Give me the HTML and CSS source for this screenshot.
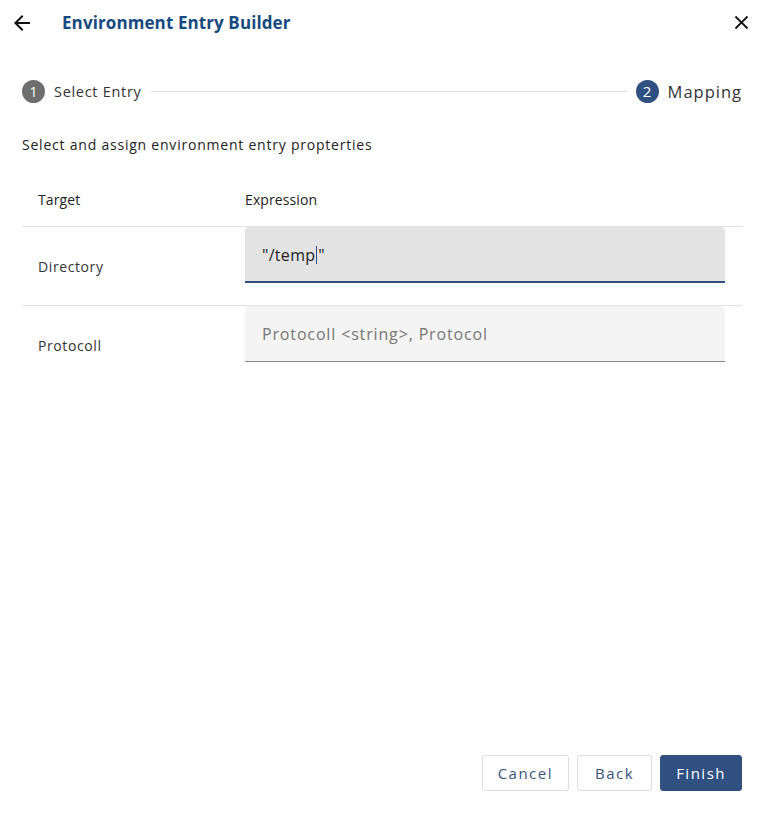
FILE: index.html
```html
<!DOCTYPE html>
<html>
<head lang="en">
    <meta charset="UTF-8">
    <title>Environment Entry Builder</title>
    <link rel="stylesheet" href="styles.css">
</head>
<body>
    <div id="dialog">
        <div class="header">
            <span class="icon-btn back">
                <svg width="24" height="24" viewBox="0 0 24 24"><path d="M20 11H7.83l5.59-5.59L12 4l-8 8 8 8 1.41-1.41L7.83 13H20v-2z" fill="#111"/></svg>
            </span>
            <h1 class="title">Environment Entry Builder</h1>
            <span class="icon-btn close">
                <svg width="23" height="23" viewBox="0 0 24 24"><path d="M19 6.41L17.59 5 12 10.59 6.41 5 5 6.41 10.59 12 5 17.59 6.41 19 12 13.41 17.59 19 19 17.59 13.41 12z" fill="#111"/></svg>
            </span>
        </div>
        <div class="stepper">
            <div class="step done">
                <span class="num">1</span>
                <span class="label">Select Entry</span>
            </div>
            <div class="step-line"></div>
            <div class="step active">
                <span class="num">2</span>
                <span class="label">Mapping</span>
            </div>
        </div>
        <p class="desc">Select and assign environment entry propterties</p>
        <div class="table">
            <div class="row head">
                <div class="col-target">Target</div>
                <div class="col-expr">Expression</div>
            </div>
            <div class="row">
                <div class="col-target">Directory</div>
                <div class="col-expr">
                    <div class="field focused"><span class="value">"/temp</span><span class="caret"></span><span class="value">"</span></div>
                </div>
            </div>
            <div class="row">
                <div class="col-target">Protocoll</div>
                <div class="col-expr">
                    <div class="field"><span class="placeholder">Protocoll &lt;string&gt;, Protocol</span></div>
                </div>
            </div>
        </div>
        <div class="footer">
            <button class="btn">Cancel</button>
            <button class="btn back-btn">Back</button>
            <button class="btn primary">Finish</button>
        </div>
    </div>
</body>
</html>
```
FILE: styles.css
```css
*{
    margin: 0;
    padding: 0;
    box-sizing: border-box;
}
html,body{
    height: 100%;
    background: #fff;
}
body{
    font-family: "Open Sans", "Noto Sans", sans-serif;
    color: #222;
}
#dialog{
    height: 823px;
    display: flex;
    flex-direction: column;
    padding: 0 23px 0 22px;
}
.header{
    height: 45px;
    display: flex;
    align-items: center;
}
.icon-btn{
    display: flex;
    align-items: center;
    justify-content: center;
    width: 24px;
    height: 24px;
}
.back{
    margin-left: -12px;
}
.title{
    font-size: 17px;
    font-weight: 700;
    color: #174a80;
    margin-left: 28px;
    flex: 1;
    letter-spacing: 0.1px;
}
.close{
    margin-right: -11px;
}
.stepper{
    display: flex;
    align-items: center;
    margin-top: 34px;
    height: 24px;
}
.step{
    display: flex;
    align-items: center;
}
.num{
    width: 23px;
    height: 23px;
    border-radius: 50%;
    color: #fff;
    font-size: 14px;
    display: flex;
    align-items: center;
    justify-content: center;
    background: #6e6e6e;
}
.step .label{
    margin-left: 9px;
    font-size: 14.5px;
    color: #333;
    letter-spacing: 0.7px;
}
.step.active .num{
    background: #2f5080;
    font-size: 15px;
}
.step.active .label{
    font-size: 16.5px;
    color: #333;
    letter-spacing: 1px;
}
.step-line{
    flex: 1;
    height: 1px;
    background: #dedede;
    margin: 0 9px;
}
.desc{
    margin-top: 32px;
    font-size: 14px;
    color: #222;
    letter-spacing: 0.78px;
}
.table{
    margin-top: 18px;
}
.row{
    display: flex;
    align-items: center;
    height: 79px;
    border-bottom: 1px solid #e2e2e2;
    font-size: 14px;
    color: #333;
}
.row:last-child{
    border-bottom: none;
}
.row.head{
    height: 55px;
    color: #222;
}
.row .col-target{
    letter-spacing: 0.6px;
}
.row.head .col-target,
.row.head .col-expr{
    letter-spacing: 0.1px;
}
.col-target{
    width: 223px;
    padding-left: 16px;
}
.col-expr{
    flex: 1;
    padding-right: 17px;
}
.row .col-expr .field{
    margin-bottom: 23px;
}
.field{
    height: 56px;
    background: #f4f4f4;
    border-bottom: 1px solid #8a8a8a;
    border-radius: 4px 4px 0 0;
    display: flex;
    align-items: center;
    padding-left: 17px;
    font-size: 16px;
}
.field.focused{
    background: #e3e3e3;
    border-bottom: 2px solid #2f5080;
    padding-top: 2px;
}
.value{
    color: #222;
    letter-spacing: 0.3px;
}
.caret{
    width: 1px;
    height: 18px;
    background: #2f5080;
    margin: 0 1px;
}
.placeholder{
    color: #767676;
    letter-spacing: 0.85px;
}
.footer{
    margin-top: auto;
    margin-bottom: 32px;
    display: flex;
    justify-content: flex-end;
    gap: 8px;
}
.btn{
    height: 36px;
    padding: 0 15px;
    border: 1px solid #dcdcdc;
    border-radius: 3px;
    background: #fff;
    color: #3a5580;
    font-family: "Open Sans", "Noto Sans", sans-serif;
    font-size: 15px;
    letter-spacing: 1.5px;
    cursor: pointer;
}
.btn.back-btn{
    padding: 0 17px;
}
.btn.primary{
    background: #2f5080;
    border-color: #2f5080;
    color: #fff;
}
```
